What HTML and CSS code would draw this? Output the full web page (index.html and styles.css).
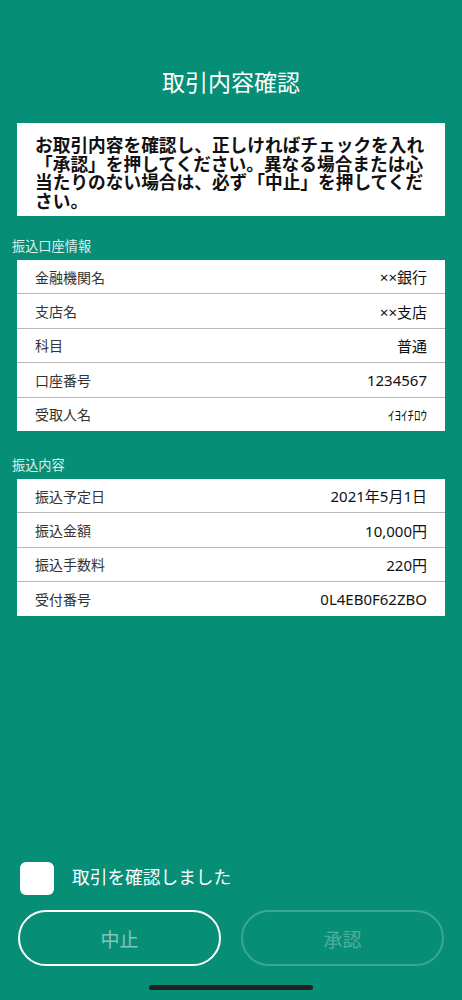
FILE: index.html
```html
<!DOCTYPE html>
<html lang="ja">
<head>
    <meta charset="UTF-8">
    <title>取引内容確認</title>
    <link rel="stylesheet" href="styles.css">
</head>
<body>
    <div class="page">
        <h1 class="title">取引内容確認</h1>

        <div class="notice">
            お取引内容を確認し、正しければチェックを入れ「承認」を押してください。異なる場合または心当たりのない場合は、必ず「中止」を押してください。
        </div>

        <h2 class="section-label">振込口座情報</h2>
        <div class="table">
            <div class="row"><span class="label">金融機関名</span><span class="value">××銀行</span></div>
            <div class="row"><span class="label">支店名</span><span class="value">××支店</span></div>
            <div class="row"><span class="label">科目</span><span class="value">普通</span></div>
            <div class="row"><span class="label">口座番号</span><span class="value">1234567</span></div>
            <div class="row"><span class="label">受取人名</span><span class="value kana">ｲﾖｲﾁﾛｳ</span></div>
        </div>

        <h2 class="section-label">振込内容</h2>
        <div class="table">
            <div class="row"><span class="label">振込予定日</span><span class="value">2021年5月1日</span></div>
            <div class="row"><span class="label">振込金額</span><span class="value">10,000円</span></div>
            <div class="row"><span class="label">振込手数料</span><span class="value">220円</span></div>
            <div class="row"><span class="label">受付番号</span><span class="value">0L4EB0F62ZBO</span></div>
        </div>

        <div class="footer">
            <label class="confirm">
                <span class="checkbox"></span>
                <span>取引を確認しました</span>
            </label>
            <div class="buttons">
                <button class="btn btn-cancel">中止</button>
                <button class="btn btn-ok" disabled>承認</button>
            </div>
            <div class="home-bar"></div>
        </div>
    </div>
</body>
</html>
```

FILE: styles.css
```css
* {
    box-sizing: border-box;
}

body {
    margin: 0;
    background: #078e77;
    font-family: "Noto Sans CJK JP", "Noto Sans", sans-serif;
    color: #222;
}

.page {
    height: 1000px;
    display: flex;
    flex-direction: column;
}

.title {
    margin: 66px 0 27px;
    height: 30px;
    line-height: 30px;
    text-align: center;
    font-size: 23px;
    font-weight: normal;
    color: #fff;
}

.notice {
    margin: 0 17px;
    background: #fff;
    padding: 12px 18px 7px;
    height: 93px;
    font-size: 17.7px;
    line-height: 18.5px;
    font-weight: bold;
    color: #111;
}

.section-label {
    margin: 21px 0 5px 12px;
    height: 18px;
    line-height: 18px;
    font-size: 13.2px;
    font-weight: normal;
    color: rgba(255, 255, 255, 0.88);
}

.table + .section-label {
    margin-top: 25px;
}

.table {
    margin: 0 17px;
    background: #fff;
}

.row {
    display: flex;
    justify-content: space-between;
    align-items: center;
    height: 34.4px;
    padding: 0 18px;
    font-size: 14px;
    border-top: 1px solid #b8b8b8;
}

.row:first-child {
    border-top: none;
    height: 33.4px;
}

.label {
    color: #333;
}

.value {
    color: #111;
    font-family: "Noto Sans", "Noto Sans CJK JP", sans-serif;
    font-size: 15px;
}

.kana {
    font-size: 13px;
}

.footer {
    margin-top: auto;
    padding: 0 18px 10px;
}

.confirm {
    display: flex;
    align-items: center;
    gap: 18px;
    padding-left: 2px;
    font-size: 17.7px;
    line-height: 1.2;
    color: #fff;
}

.confirm span:last-child {
    margin-top: -3px;
}

.checkbox {
    width: 34px;
    height: 33px;
    background: #fff;
    border-radius: 6px;
}

.buttons {
    display: flex;
    justify-content: space-between;
    margin-top: 15px;
}

.btn {
    width: 203px;
    height: 56px;
    border-radius: 28px;
    background: transparent;
    font-family: inherit;
    font-size: 19px;
}

.btn-cancel {
    border: 2px solid #fff;
    color: rgba(255, 255, 255, 0.5);
}

.btn-ok {
    border: 2px solid rgba(255, 255, 255, 0.22);
    color: rgba(255, 255, 255, 0.3);
}

.home-bar {
    width: 164px;
    height: 5px;
    margin: 19px auto 0;
    border-radius: 3px;
    background: #222;
}
```
